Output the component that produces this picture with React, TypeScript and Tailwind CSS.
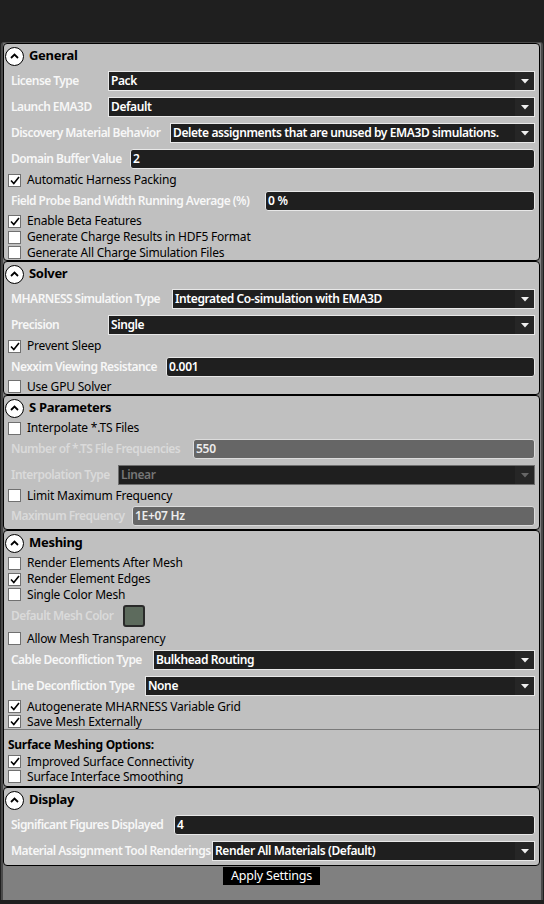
import React from 'react';

const font = { fontFamily: '"Noto Sans", "Open Sans", Arial, sans-serif' };

function SectionHeader({ title }: { title: string }) {
  return (
    <div className="flex h-[24px] items-center pl-[1px]">
      <span className="flex h-[19px] w-[19px] items-center justify-center rounded-full border-[1.5px] border-black bg-white">
        <svg width="9" height="6" viewBox="0 0 9 6">
          <path d="M1 5 L4.5 1.5 L8 5" fill="none" stroke="black" strokeWidth="1.8" />
        </svg>
      </span>
      <span className="ml-[5px] text-[13px] font-bold tracking-[-0.3px] text-black">{title}</span>
    </div>
  );
}

function Section({ title, children }: { title: string; children: React.ReactNode }) {
  return (
    <div className="rounded-[4px] border border-black bg-[#c0c0c0] pr-[4px]">
      <SectionHeader title={title} />
      {children}
    </div>
  );
}

function Label({ text, w, disabled }: { text: string; w: number; disabled?: boolean }) {
  return (
    <div
      className={`shrink-0 whitespace-nowrap pl-[7px] text-[12px] font-semibold tracking-[-0.55px] ${disabled ? 'text-[#dadada]' : 'text-[#f7f7f7]'}`}
      style={{ width: w }}
    >
      {text}
    </div>
  );
}

type RowProps = { label: string; w: number; value: string; disabled?: boolean; h?: number };

function ComboRow({ label, w, value, disabled, h = 26 }: RowProps) {
  return (
    <div className="flex items-center" style={{ height: h }}>
      <Label text={label} w={w} disabled={disabled} />
      <div
        className={`flex h-[20px] flex-1 items-center border bg-[#1f1f1f] ${disabled ? 'border-[#6e6e6e]' : 'border-[#e8e8e8]'}`}
      >
        <span
          className={`flex-1 truncate pl-[2px] text-[12px] font-semibold tracking-[-0.4px] ${disabled ? 'text-[#767676]' : 'text-white'}`}
        >
          {value}
        </span>
        <span className="flex h-full w-[19px] items-center justify-center bg-[#262626]">
          <svg width="8" height="5" viewBox="0 0 8 5">
            <path d="M0 0 H8 L4 4.5 Z" fill={disabled ? '#666' : '#f0f0f0'} />
          </svg>
        </span>
      </div>
    </div>
  );
}

function TextRow({ label, w, value, disabled, h = 26 }: RowProps) {
  return (
    <div className="flex items-center" style={{ height: h }}>
      <Label text={label} w={w} disabled={disabled} />
      <div
        className={`flex h-[20px] flex-1 items-center rounded-[3px] border ${disabled ? 'border-[#dcdcdc] bg-[#666666]' : 'border-[#e8e8e8] bg-[#1f1f1f]'}`}
      >
        <span className={`pl-[2px] text-[12px] font-semibold tracking-[-0.3px] ${disabled ? 'text-[#ececec]' : 'text-white'}`}>
          {value}
        </span>
      </div>
    </div>
  );
}

function CheckRow({ label, checked, h = 15 }: { label: string; checked?: boolean; h?: number }) {
  return (
    <div className="flex items-center pl-[4px]" style={{ height: h }}>
      <span className="flex h-[13px] w-[13px] items-center justify-center border border-[#707070] bg-white">
        {checked && (
          <svg width="10" height="9" viewBox="0 0 10 9">
            <path d="M1 4.5 L3.8 7.5 L9 1" fill="none" stroke="black" strokeWidth="1.6" />
          </svg>
        )}
      </span>
      <span className="ml-[6px] whitespace-nowrap text-[12px] leading-[14px] tracking-[-0.2px] text-black">{label}</span>
    </div>
  );
}

export default function App() {
  return (
    <div className="min-h-screen w-[544px] bg-[#1f1f1f]" style={font}>
      <div className="h-[42px]" />
      <div className="mx-[1px] h-[858px] rounded-t-[3px] border-x-2 border-t border-[#4a4a4a] bg-[#808080] pr-[1px]">
        <Section title="General">
          <ComboRow label="License Type" w={104} value="Pack" />
          <ComboRow label="Launch EMA3D" w={104} value="Default" />
          <ComboRow label="Discovery Material Behavior" w={166} value="Delete assignments that are unused by EMA3D simulations." />
          <TextRow label="Domain Buffer Value" w={126} value="2" />
          <CheckRow label="Automatic Harness Packing" checked h={16} />
          <TextRow label="Field Probe Band Width Running Average (%)" w={261} value="0 %" h={25} />
          <CheckRow label="Enable Beta Features" checked h={16} />
          <CheckRow label="Generate Charge Results in HDF5 Format" h={16} />
          <CheckRow label="Generate All Charge Simulation Files" h={15} />
        </Section>

        <Section title="Solver">
          <ComboRow label="MHARNESS Simulation Type" w={168} value="Integrated Co-simulation with EMA3D" />
          <ComboRow label="Precision" w={104} value="Single" />
          <CheckRow label="Prevent Sleep" checked h={16} />
          <TextRow label="Nexxim Viewing Resistance" w={162} value="0.001" h={25} />
          <CheckRow label="Use GPU Solver" h={15} />
        </Section>

        <Section title="S Parameters">
          <CheckRow label="Interpolate *.TS Files" h={16} />
          <TextRow label="Number of *.TS File Frequencies" w={189} value="550" disabled />
          <ComboRow label="Interpolation Type" w={114} value="Linear" disabled />
          <CheckRow label="Limit Maximum Frequency" h={15} />
          <TextRow label="Maximum Frequency" w={128} value="1E+07 Hz" disabled />
        </Section>

        <Section title="Meshing">
          <CheckRow label="Render Elements After Mesh" h={16} />
          <CheckRow label="Render Element Edges" checked h={16} />
          <CheckRow label="Single Color Mesh" h={15} />
          <div className="flex h-[28px] items-center">
            <Label text="Default Mesh Color" w={119} disabled />
            <span className="h-[22px] w-[22px] rounded-[3px] border-2 border-[#2a2a2a] bg-[#5d6b5d]" />
          </div>
          <CheckRow label="Allow Mesh Transparency" h={17} />
          <ComboRow label="Cable Deconfliction Type" w={149} value="Bulkhead Routing" />
          <ComboRow label="Line Deconfliction Type" w={141} value="None" />
          <CheckRow label="Autogenerate MHARNESS Variable Grid" checked h={15} />
          <CheckRow label="Save Mesh Externally" checked h={15} />
          <div className="-mr-[4px] h-px bg-[#7a7a7a]" />
          <div className="flex h-[24px] items-center pl-[4px] pt-[6px] text-[12px] font-bold tracking-[-0.3px] text-black">
            Surface Meshing Options:
          </div>
          <CheckRow label="Improved Surface Connectivity" checked h={15} />
          <CheckRow label="Surface Interface Smoothing" h={15} />
          <div className="h-[2px]" />
        </Section>

        <Section title="Display">
          <TextRow label="Significant Figures Displayed" w={170} value="4" />
          <ComboRow label="Material Assignment Tool Renderings" w={208} value="Render All Materials (Default)" />
          <div className="h-px" />
        </Section>

        <div className="mt-px flex justify-center">
          <button className="h-[18px] w-[97px] bg-black text-[12.5px] leading-[18px] tracking-[-0.2px] text-white">
            Apply Settings
          </button>
        </div>
      </div>
    </div>
  );
}
